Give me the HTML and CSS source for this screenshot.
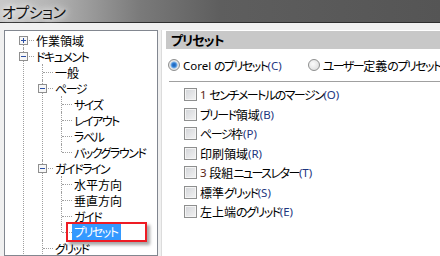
FILE: index.html
```html
<!DOCTYPE html>
<html lang="ja">
<head>
  <meta charset="UTF-8">
  <title>オプション</title>
  <link rel="stylesheet" href="styles.css">
</head>
<body>

  <!-- Window caption -->
  <header class="caption">
    <span class="caption-text">オプション</span>
  </header>

  <div class="dialog">

    <!-- Left: category tree -->
    <nav class="tree">
      <ul class="lvl">
        <li class="first">
          <div class="row kj"><span class="gut"><svg class="tgl" width="9" height="9"><rect x="0.5" y="0.5" width="8" height="8" fill="#f7f7f7" stroke="#8f8f8f"/><path d="M2 4.5h5M4.5 2v5" stroke="#2b4fa5"/></svg></span>作業領域</div>
        </li>
        <li>
          <div class="row"><span class="gut"><svg class="tgl" width="9" height="9"><rect x="0.5" y="0.5" width="8" height="8" fill="#f7f7f7" stroke="#8f8f8f"/><path d="M2 4.5h5" stroke="#2b4fa5"/></svg></span>ドキュメント</div>
          <ul class="lvl">
            <li><div class="row kj"><span class="gut"></span>一般</div></li>
            <li>
              <div class="row"><span class="gut"><svg class="tgl" width="9" height="9"><rect x="0.5" y="0.5" width="8" height="8" fill="#f7f7f7" stroke="#8f8f8f"/><path d="M2 4.5h5" stroke="#2b4fa5"/></svg></span>ページ</div>
              <ul class="lvl">
                <li><div class="row"><span class="gut"></span>サイズ</div></li>
                <li><div class="row"><span class="gut"></span>レイアウト</div></li>
                <li><div class="row"><span class="gut"></span>ラベル</div></li>
                <li class="last"><div class="row"><span class="gut"></span>バックグラウンド</div></li>
              </ul>
            </li>
            <li>
              <div class="row"><span class="gut"><svg class="tgl" width="9" height="9"><rect x="0.5" y="0.5" width="8" height="8" fill="#f7f7f7" stroke="#8f8f8f"/><path d="M2 4.5h5" stroke="#2b4fa5"/></svg></span>ガイドライン</div>
              <ul class="lvl">
                <li><div class="row kj"><span class="gut"></span>水平方向</div></li>
                <li><div class="row kj"><span class="gut"></span>垂直方向</div></li>
                <li><div class="row"><span class="gut"></span>ガイド</div></li>
                <li class="last">
                  <div class="row"><span class="gut"></span><span class="sel">プリセット</span></div>
                  <div class="mark"></div>
                </li>
              </ul>
            </li>
            <li><div class="row"><span class="gut"></span>グリッド</div></li>
          </ul>
        </li>
      </ul>
    </nav>

    <!-- Right: preset page -->
    <main class="pane">
      <div class="pane-head">プリセット</div>

      <div class="radios">
        <label class="opt"><span class="radio on"></span><span class="lat">Corel</span>&nbsp;<span class="kn">のプリセット</span><span class="key">(C)</span></label>
        <label class="opt"><span class="radio"></span><span class="kn">ユーザー</span>定義<span class="kn">のプリセット</span><span class="key">(U)</span></label>
      </div>

      <div class="sep"></div>

      <ul class="checks">
        <li><span class="cb"></span><span class="num">1</span>&nbsp;<span class="kn">センチメートルのマージン</span><span class="key">(O)</span></li>
        <li><span class="cb"></span><span class="kn">ブリード</span>領域<span class="key">(B)</span></li>
        <li><span class="cb"></span><span class="kn">ページ</span>枠<span class="key">(P)</span></li>
        <li><span class="cb"></span>印刷領域<span class="key">(R)</span></li>
        <li><span class="cb"></span><span class="num">3</span>&nbsp;段組<span class="kn">ニュースレター</span><span class="key">(T)</span></li>
        <li><span class="cb"></span>標準<span class="kn">グリッド</span><span class="key">(S)</span></li>
        <li><span class="cb"></span>左上端<span class="kn">のグリッド</span><span class="key">(E)</span></li>
      </ul>
    </main>

  </div>

</body>
</html>
```

FILE: styles.css
```css
* {
  margin: 0;
  padding: 0;
  box-sizing: border-box;
}

body {
  font-family: "Noto Sans CJK JP", sans-serif;
  font-size: 12px;
  font-feature-settings: "palt";
  background: #f0f0f0;
  color: #000;
  width: 440px;
  height: 256px;
  overflow: hidden;
}

/* caption bar */

.caption {
  height: 23px;
  background: linear-gradient(90deg, #c9c9c9 0, #b4b4b4 50px, #7a7a7a 140px, #5e5e5e 220px, #555 100%);
  border-bottom: 1px solid #2e2e2e;
  padding-left: 2px;
  display: flex;
  align-items: center;
}

.caption-text {
  font-size: 15px;
  color: #111;
  letter-spacing: -0.5px;
  text-shadow: 0 0 6px #fff, 0 0 10px #fff;
}

.dialog {
  display: flex;
  gap: 3px;
  padding: 7px 0 0 4px;
  height: 233px;
}

/* tree */

.tree {
  width: 154px;
  background: #fff;
  border: 1px solid #828790;
  padding: 0 0 0 14px;
  overflow: hidden;
}

.tree > .lvl {
  padding-top: 1px;
}

.lvl {
  list-style: none;
}

.lvl .lvl {
  padding-left: 19px;
}

.lvl li {
  position: relative;
}

/* vertical connector */
.lvl li::before {
  content: "";
  position: absolute;
  left: 4px;
  top: 0;
  bottom: 0;
  border-left: 1px dotted #a0a0a0;
}

.lvl li.first::before {
  top: 8px;
}

.lvl li.last::before {
  bottom: auto;
  height: 8px;
}

.row {
  height: 16px;
  display: flex;
  align-items: center;
  white-space: nowrap;
  position: relative;
  letter-spacing: -1.5px;
}

.row.kj {
  letter-spacing: 0;
}

.gut {
  width: 17px;
  height: 16px;
  flex: none;
  display: flex;
  align-items: center;
  position: relative;
}

/* horizontal connector */
.gut::before {
  content: "";
  position: absolute;
  left: 5px;
  width: 10px;
  top: 8px;
  border-top: 1px dotted #a0a0a0;
}

.tgl {
  display: block;
  position: relative;
  z-index: 1;
}

.sel {
  background: #3399ff;
  color: #fff;
  padding: 0 4px 0 2px;
  margin-left: -2px;
  line-height: 16px;
}

.mark {
  position: absolute;
  left: 9px;
  top: -2px;
  width: 81px;
  height: 20px;
  border: 2px solid #ee1c24;
  box-shadow: 3px 3px 3px rgba(0, 0, 0, 0.35);
}

/* right pane */

.pane {
  flex: 1;
  background: #fff;
  border-left: 1px solid #dcdcdc;
  padding: 1px 0 0 4px;
  overflow: hidden;
}

.pane-head {
  height: 18px;
  background: #c8c8c8;
  font-size: 13px;
  font-weight: bold;
  letter-spacing: -1px;
  padding-left: 5px;
  line-height: 18px;
  white-space: nowrap;
}

.radios {
  display: flex;
  gap: 26px;
  padding: 9px 0 0 2px;
  height: 32px;
  white-space: nowrap;
}

.opt {
  display: flex;
  align-items: center;
  height: 14px;
}

.kn {
  letter-spacing: -1.5px;
}

.radio {
  width: 12px;
  height: 12px;
  border-radius: 50%;
  border: 1px solid #8e8f8f;
  background: radial-gradient(circle at 40% 40%, #fbfbfb, #d8d8d8);
  margin-right: 3px;
  flex: none;
}

.radio.on {
  background: radial-gradient(circle, #1f5fb0 0, #2f7fd6 2px, #7fb2e6 3px, #eaeaea 4px, #d4d4d4 6px);
}

.lat {
  font-family: "Noto Sans", sans-serif;
  font-size: 11.5px;
}

.key {
  color: #1d3680;
  font-family: "Noto Sans", sans-serif;
  font-size: 11.5px;
}

.num {
  color: #5b2418;
  font-family: "Noto Sans", sans-serif;
  font-size: 11.5px;
}

.sep {
  height: 1px;
  margin-left: 3px;
  background: #a0a0a0;
}

.checks {
  list-style: none;
  padding: 3px 0 0 18px;
}

.checks li {
  height: 19.5px;
  display: flex;
  align-items: center;
  white-space: nowrap;
}

.cb {
  width: 13px;
  height: 13px;
  border: 1px solid #8e8f8f;
  background: linear-gradient(135deg, #d2d4d8, #f3f3f3);
  box-shadow: inset 0 0 0 1px #f4f4f4;
  margin-right: 3px;
  flex: none;
}
```
